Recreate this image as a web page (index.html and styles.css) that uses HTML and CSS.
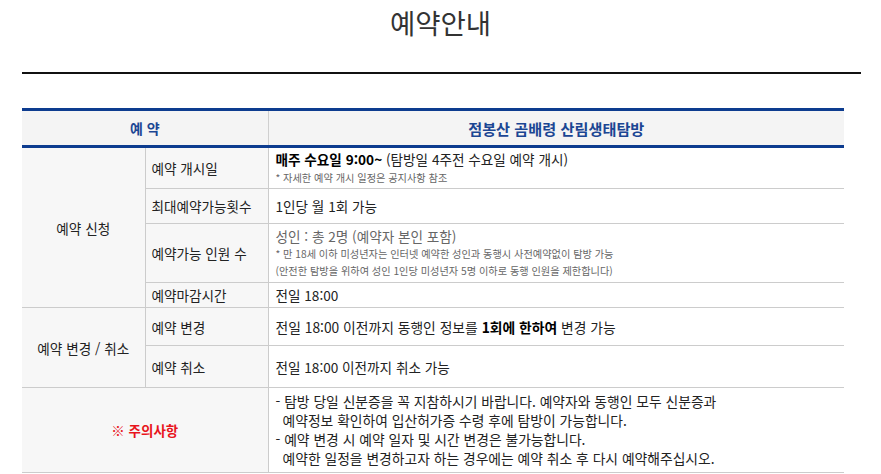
FILE: index.html
```html
<!DOCTYPE html>
<html lang="ko">
<head>
<meta charset="utf-8">
<title>예약안내</title>
<link rel="stylesheet" href="styles.css">
</head>
<body>
<div class="page">
  <h1 class="title">예약안내</h1>
  <div class="rule"></div>
  <table class="info">
    <colgroup>
      <col class="c1"><col class="c2"><col class="c3">
    </colgroup>
    <thead>
      <tr class="head">
        <th colspan="2">예 약</th>
        <th class="sep">점봉산 곰배령 산림생태탐방</th>
      </tr>
    </thead>
    <tbody>
      <tr class="r1">
        <td rowspan="4" class="group">예약 신청</td>
        <td class="label">예약 개시일</td>
        <td class="content">
          <div class="main"><b class="strong">매주 수요일 9:00~</b> (탐방일 4주전 수요일 예약 개시)</div>
          <div class="small">* 자세한 예약 개시 일정은 공지사항 참조</div>
        </td>
      </tr>
      <tr class="r2">
        <td class="label">최대예약가능횟수</td>
        <td class="content"><div class="main">1인당 월 1회 가능</div></td>
      </tr>
      <tr class="r3">
        <td class="label">예약가능 인원 수</td>
        <td class="content">
          <div class="main gray">성인 : 총 2명 (예약자 본인 포함)</div>
          <div class="small">* 만 18세 이하 미성년자는 인터넷 예약한 성인과 동행시 사전예약없이 탐방 가능</div>
          <div class="small">(안전한 탐방을 위하여 성인 1인당 미성년자 5명 이하로 동행 인원을 제한합니다)</div>
        </td>
      </tr>
      <tr class="r4">
        <td class="label">예약마감시간</td>
        <td class="content"><div class="main">전일 18:00</div></td>
      </tr>
      <tr class="r5">
        <td rowspan="2" class="group">예약 변경 / 취소</td>
        <td class="label">예약 변경</td>
        <td class="content"><div class="main">전일 18:00 이전까지 동행인 정보를 <b class="strong">1회에 한하여</b> 변경 가능</div></td>
      </tr>
      <tr class="r6">
        <td class="label">예약 취소</td>
        <td class="content"><div class="main">전일 18:00 이전까지 취소 가능</div></td>
      </tr>
      <tr class="r7">
        <td colspan="2" class="group caution">※ 주의사항</td>
        <td class="content notes">
          <div class="line">- 탐방 당일 신분증을 꼭 지참하시기 바랍니다. 예약자와 동행인 모두 신분증과</div>
          <div class="line cont">예약정보 확인하여 입산허가증 수령 후에 탐방이 가능합니다.</div>
          <div class="line">- 예약 변경 시 예약 일자 및 시간 변경은 불가능합니다.</div>
          <div class="line cont">예약한 일정을 변경하고자 하는 경우에는 예약 취소 후 다시 예약해주십시오.</div>
        </td>
      </tr>
    </tbody>
  </table>
</div>
</body>
</html>
```

FILE: styles.css
```css
html, body {
  margin: 0;
  padding: 0;
  background: #ffffff;
}

body {
  font-family: "Noto Sans CJK KR", "Noto Sans", sans-serif;
  color: #222222;
}

.page {
  width: 881px;
}

.title {
  margin: 0;
  height: 72px;
  line-height: 44px;
  font-size: 27.5px;
  font-weight: 400;
  text-align: center;
  color: #333333;
}

.rule {
  margin: 0 20px 0 22px;
  border-top: 2px solid #111111;
}

.info {
  margin: 34px 0 0 22px;
  width: 822px;
  border-collapse: collapse;
  table-layout: fixed;
  border-top: 3px solid #0d3c8f;
}

.c1 { width: 123px; }
.c2 { width: 123px; }
.c3 { width: 576px; }

.head th {
  height: 34px;
  padding: 0;
  background: #f4f4f4;
  color: #1b4693;
  font-size: 14px;
  font-weight: 700;
  text-align: center;
  border-bottom: 3px solid #0d3c8f;
}

.head th.sep {
  border-left: 1px solid #cfcfcf;
  font-size: 15.2px;
}

td {
  padding: 0;
  font-size: 13.6px;
  border-bottom: 1px solid #cccccc;
  vertical-align: middle;
}

.group {
  background: #f7f7f7;
  text-align: center;
  color: #222222;
}

.label {
  background: #f7f7f7;
  padding-left: 6px;
  border-left: 1px solid #cccccc;
  color: #222222;
}

.content {
  padding: 0 7px;
  border-left: 1px solid #cccccc;
  color: #222222;
}

.main {
  line-height: 18px;
}

.r5 .main {
  font-size: 13.8px;
}

.strong {
  color: #000000;
  font-weight: 700;
}

.gray {
  color: #666666;
}

.small {
  font-size: 10.2px;
  line-height: 17.5px;
  color: #666666;
}

.r1 { height: 42px; }
.r2 { height: 35px; }
.r3 { height: 59px; }
.r4 { height: 25px; }
.r5 { height: 38px; }
.r6 { height: 42px; }
.r7 { height: 85px; }

.r1 .small { line-height: 19px; }

.caution {
  color: #e8141c;
  font-weight: 700;
  font-size: 13.5px;
}

.notes .line {
  line-height: 18.9px;
  font-size: 13.8px;
}

.notes .cont {
  padding-left: 7px;
}
```
